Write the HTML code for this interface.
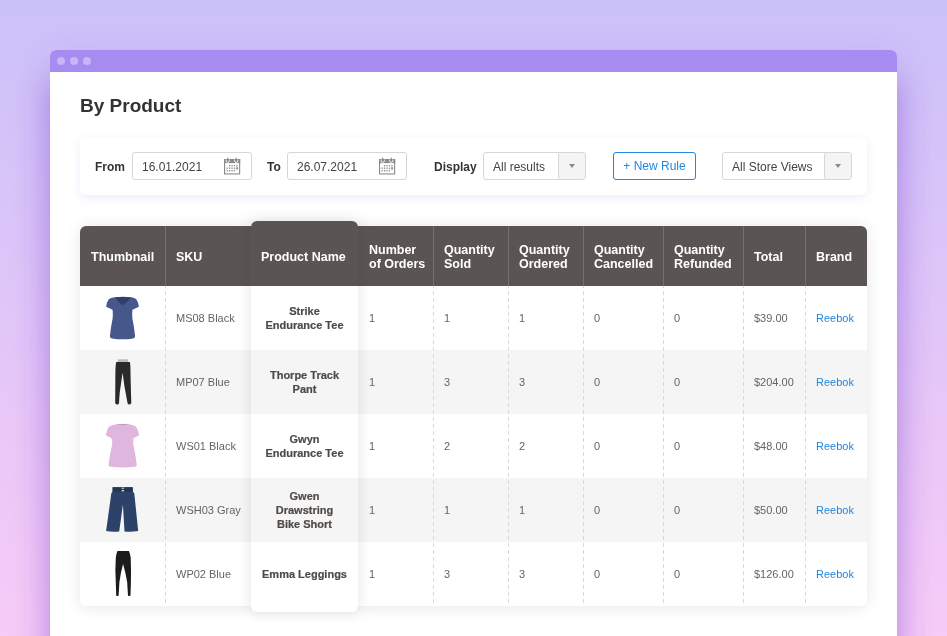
<!DOCTYPE html><html><head><meta charset="utf-8"><style>
*{margin:0;padding:0;box-sizing:border-box}
html,body{width:947px;height:636px;overflow:hidden}
body{font-family:"Liberation Sans",sans-serif;-webkit-font-smoothing:antialiased;background:linear-gradient(180deg,#cbc1f9 0%,#f7cbf7 100%);position:relative}
.win{position:absolute;left:50px;top:50px;width:847px;height:640px;background:#fff;border-radius:6px 6px 0 0;box-shadow:0 32px 30px rgba(115,55,205,0.38),0 12px 40px rgba(115,55,205,0.16)}
.tb{position:absolute;left:0;top:0;width:847px;height:22px;background:#a68cf0;border-radius:6px 6px 0 0}
.dot{position:absolute;top:7px;width:8px;height:8px;border-radius:50%;background:#c6b6f8}
.abs{position:absolute;white-space:nowrap}
h1,.lbl,.inp,.sel,.btn,.tbl,.pcol{will-change:transform}
h1{position:absolute;left:80px;top:95px;font-size:19px;font-weight:bold;color:#333;line-height:22px}
.card{position:absolute;left:80px;top:137px;width:787px;height:58px;background:#fff;border-radius:6px;box-shadow:0 3px 8px rgba(100,100,240,0.12)}
.lbl{position:absolute;font-size:12px;font-weight:bold;color:#333;line-height:28px;top:153px}
.inp{position:absolute;top:152px;height:28px;border:1px solid #d6d6d6;border-radius:3px;background:#fff;font-size:12px;color:#444;line-height:28px;padding-left:9px}
.cal{position:absolute;top:3px;left:90px}
.sel{position:absolute;top:152px;height:28px;border:1px solid #d6d6d6;border-radius:3px;background:#fff;font-size:12px;color:#444;line-height:28px;padding-left:9px}
.sel .arr{position:absolute;right:0;top:0;width:27px;height:26px;background:#f4f4f4;border-left:1px solid #d6d6d6;border-radius:2px 2px 2px 2px}
.sel .arr:after{content:"";position:absolute;left:10px;top:11px;border-left:3.5px solid transparent;border-right:3.5px solid transparent;border-top:4px solid #8a8a8a}
.btn{position:absolute;left:613px;top:152px;width:83px;height:28px;border:1px solid #1f88e2;border-radius:3px;color:#1f88e2;font-size:12px;line-height:26px;text-align:center}
.tbl{position:absolute;left:80px;top:226px;width:787px;height:380px;border-radius:6px;box-shadow:0 1px 16px rgba(0,0,0,0.10);background:#fff;overflow:hidden}
.hd{position:absolute;top:0;height:60px;background:#5a5552;color:#fff;font-size:12.5px;font-weight:bold;line-height:14px;display:flex;align-items:center;padding-left:11px;padding-top:2px}
.hdv{position:absolute;top:0;width:1px;height:60px;background:#76716e}
.row{position:absolute;left:0;width:787px;height:64px}
.cell{position:absolute;top:0;height:64px;display:flex;align-items:center;padding-left:11px;font-size:11px;color:#69635f}
.dash{position:absolute;width:1px;background:repeating-linear-gradient(180deg,#d9d9d9 0,#d9d9d9 1.8px,transparent 1.8px,transparent 5.3px,#d9d9d9 5.3px,#d9d9d9 7px)}
.pcol{position:absolute;left:251px;top:221px;width:107px;height:391px;border-radius:6px;background:#fff;box-shadow:0 0 14px rgba(20,35,60,0.13);overflow:hidden}
.pname{position:absolute;left:0;width:107px;height:64px;display:flex;align-items:center;justify-content:center;text-align:center;font-size:11px;font-weight:bold;color:#4f4a46;line-height:14px;-webkit-text-stroke:0.2px #4f4a46}
.link{color:#1f87e0}
</style></head><body>
<div class="win"><div class="tb"><div class="dot" style="left:7px"></div><div class="dot" style="left:20px"></div><div class="dot" style="left:33px"></div></div></div>
<h1>By Product</h1>
<div class="card"></div>
<div class="lbl" style="left:95px">From</div>
<div class="inp" style="left:132px;width:120px">16.01.2021<svg class="cal" width="20" height="20" viewBox="0 0 20 20"><rect x="1.55" y="3.55" width="15.1" height="14.4" fill="none" stroke="#8a8a8a" stroke-width="1.1"/><rect x="1" y="3" width="16.2" height="4.1" fill="#8a8a8a"/><path d="M3.1,3.6 L3.1,4.8 Q3.1,6.4 4.7,6.4 Q6.3,6.4 6.3,4.8 L6.3,3.6 M11.6,3.6 L11.6,4.8 Q11.6,6.4 13.2,6.4 Q14.8,6.4 14.8,4.8 L14.8,3.6" stroke="#fff" stroke-width="0.9" fill="none"/><rect x="4.1" y="1.7" width="1.2" height="3.6" fill="#8a8a8a"/><rect x="12.6" y="1.7" width="1.2" height="3.6" fill="#8a8a8a"/><g fill="#8f8f8f"><rect x="5.95" y="9.0" width="1.3" height="1.4"/><rect x="8.40" y="9.0" width="1.3" height="1.4"/><rect x="10.85" y="9.0" width="1.3" height="1.4"/><rect x="13.30" y="9.0" width="1.3" height="1.4"/><rect x="3.50" y="11.5" width="1.3" height="1.4"/><rect x="5.95" y="11.5" width="1.3" height="1.4"/><rect x="8.40" y="11.5" width="1.3" height="1.4"/><rect x="10.85" y="11.5" width="1.3" height="1.4"/><rect x="13.30" y="11.5" width="1.3" height="1.4"/><rect x="3.50" y="14.0" width="1.3" height="1.4"/><rect x="5.95" y="14.0" width="1.3" height="1.4"/><rect x="8.40" y="14.0" width="1.3" height="1.4"/><rect x="10.85" y="14.0" width="1.3" height="1.4"/><rect x="13.3" y="11.3" width="1.8" height="2.2"/></g></svg></div>
<div class="lbl" style="left:267px">To</div>
<div class="inp" style="left:287px;width:120px">26.07.2021<svg class="cal" width="20" height="20" viewBox="0 0 20 20"><rect x="1.55" y="3.55" width="15.1" height="14.4" fill="none" stroke="#8a8a8a" stroke-width="1.1"/><rect x="1" y="3" width="16.2" height="4.1" fill="#8a8a8a"/><path d="M3.1,3.6 L3.1,4.8 Q3.1,6.4 4.7,6.4 Q6.3,6.4 6.3,4.8 L6.3,3.6 M11.6,3.6 L11.6,4.8 Q11.6,6.4 13.2,6.4 Q14.8,6.4 14.8,4.8 L14.8,3.6" stroke="#fff" stroke-width="0.9" fill="none"/><rect x="4.1" y="1.7" width="1.2" height="3.6" fill="#8a8a8a"/><rect x="12.6" y="1.7" width="1.2" height="3.6" fill="#8a8a8a"/><g fill="#8f8f8f"><rect x="5.95" y="9.0" width="1.3" height="1.4"/><rect x="8.40" y="9.0" width="1.3" height="1.4"/><rect x="10.85" y="9.0" width="1.3" height="1.4"/><rect x="13.30" y="9.0" width="1.3" height="1.4"/><rect x="3.50" y="11.5" width="1.3" height="1.4"/><rect x="5.95" y="11.5" width="1.3" height="1.4"/><rect x="8.40" y="11.5" width="1.3" height="1.4"/><rect x="10.85" y="11.5" width="1.3" height="1.4"/><rect x="13.30" y="11.5" width="1.3" height="1.4"/><rect x="3.50" y="14.0" width="1.3" height="1.4"/><rect x="5.95" y="14.0" width="1.3" height="1.4"/><rect x="8.40" y="14.0" width="1.3" height="1.4"/><rect x="10.85" y="14.0" width="1.3" height="1.4"/><rect x="13.3" y="11.3" width="1.8" height="2.2"/></g></svg></div>
<div class="lbl" style="left:434px">Display</div>
<div class="sel" style="left:483px;width:103px">All results<div class="arr"></div></div>
<div class="btn">+ New Rule</div>
<div class="sel" style="left:722px;width:130px">All Store Views<div class="arr"></div></div>
<div class="tbl">
<div class="hd" style="left:0px;width:85px">Thumbnail</div>
<div class="hd" style="left:85px;width:86px">SKU</div>
<div class="hd" style="left:278px;width:75px">Number<br>of Orders</div>
<div class="hd" style="left:353px;width:75px">Quantity<br>Sold</div>
<div class="hd" style="left:428px;width:75px">Quantity<br>Ordered</div>
<div class="hd" style="left:503px;width:80px">Quantity<br>Cancelled</div>
<div class="hd" style="left:583px;width:80px">Quantity<br>Refunded</div>
<div class="hd" style="left:663px;width:62px">Total</div>
<div class="hd" style="left:725px;width:62px">Brand</div>
<div class="hdv" style="left:85px"></div>
<div class="hdv" style="left:353px"></div>
<div class="hdv" style="left:428px"></div>
<div class="hdv" style="left:503px"></div>
<div class="hdv" style="left:583px"></div>
<div class="hdv" style="left:663px"></div>
<div class="hdv" style="left:725px"></div>
<div class="row" style="top:60px;background:#fff">
<svg class="abs" style="left:18px;top:4px" width="50" height="55" viewBox="0 0 50 55"><path d="M16.7,7.2 Q25,6.4 33.3,7.2 Q36.5,7.8 38.3,9.2 Q40.2,12 40.9,16.8 L34.4,19.8 Q34,24 34.3,28 Q36.2,37 37.1,46.3 Q37,48 35,48.4 Q25,50.2 14,48.4 Q12,48 11.9,46.3 Q12.8,37 14.7,28 Q15,24 14.6,19.8 L8.1,16.8 Q8.8,12 10.7,9.2 Q12.5,7.8 16.7,7.2 Z" fill="#46578a"/><path d="M17.2,7.3 Q25,6.6 32.8,7.3 Q28.5,13.5 24.8,15 Q21,13.5 17.2,7.3 Z" fill="#313f6a"/></svg>
<div class="cell" style="left:85px">MS08 Black</div>
<div class="cell" style="left:278px">1</div>
<div class="cell" style="left:353px">1</div>
<div class="cell" style="left:428px">1</div>
<div class="cell" style="left:503px">0</div>
<div class="cell" style="left:583px">0</div>
<div class="cell" style="left:663px">$39.00</div>
<div class="cell link" style="left:725px">Reebok</div>
</div>
<div class="row" style="top:124px;background:#f5f5f5">
<svg class="abs" style="left:18px;top:4px" width="50" height="55" viewBox="0 0 50 55"><path d="M19.8,5.3 L30,5.3 L30.2,8.2 L19.6,8.2 Z" fill="#bdbdbd"/><path d="M18.2,8 L31.9,8 Q32.6,12 32.5,17 Q32.7,30 33.3,49 Q32.5,50.6 31.4,50.6 Q30,50.6 29.6,49.5 Q27.5,38 26.4,32 L24.6,18.8 L22.7,32 Q21.5,38 21,49.5 Q20.5,50.6 19.1,50.6 Q17.6,50.6 17.2,49 Q17.3,30 17.4,17 Q17.4,12 18.2,8 Z" fill="#2a2a2a"/></svg>
<div class="cell" style="left:85px">MP07 Blue</div>
<div class="cell" style="left:278px">1</div>
<div class="cell" style="left:353px">3</div>
<div class="cell" style="left:428px">3</div>
<div class="cell" style="left:503px">0</div>
<div class="cell" style="left:583px">0</div>
<div class="cell" style="left:663px">$204.00</div>
<div class="cell link" style="left:725px">Reebok</div>
</div>
<div class="row" style="top:188px;background:#fff">
<svg class="abs" style="left:18px;top:4px" width="50" height="55" viewBox="0 0 50 55"><path d="M19.5,5.9 Q25,5.6 30.2,5.9 Q34.5,6.6 37.5,8.2 Q40,11 41.2,17.3 L35.5,20.3 Q35,23 35.3,26.5 Q37.8,38 38.8,47 Q38.6,48.5 36.5,48.8 Q25,50.3 12.8,48.8 Q10.6,48.5 10.5,47 Q11.5,38 14.2,26.5 Q14.6,23 13.5,20.3 L7.7,17.3 Q9,11 11.5,8.2 Q14.5,6.6 19.5,5.9 Z" fill="#dfb7de"/><path d="M19.5,5.9 Q25,8.4 30.2,5.9 Q25,6.6 19.5,5.9 Z" fill="#bb96b9"/></svg>
<div class="cell" style="left:85px">WS01 Black</div>
<div class="cell" style="left:278px">1</div>
<div class="cell" style="left:353px">2</div>
<div class="cell" style="left:428px">2</div>
<div class="cell" style="left:503px">0</div>
<div class="cell" style="left:583px">0</div>
<div class="cell" style="left:663px">$48.00</div>
<div class="cell link" style="left:725px">Reebok</div>
</div>
<div class="row" style="top:252px;background:#f5f5f5">
<svg class="abs" style="left:18px;top:4px" width="50" height="55" viewBox="0 0 50 55"><path d="M14.6,5.3 L34.7,5.3 L34.8,9.8 Q36,10.5 36.3,11.5 L40.2,49 Q33,50.3 26.5,49.5 L24.9,22.5 L21.2,49.5 Q14.5,50.3 8.1,49 L13.3,11.5 Q13.6,10.5 14.6,9.8 Z" fill="#2d4268"/><path d="M14.6,5.3 L34.7,5.3 L34.8,9.8 L14.6,9.8 Z" fill="#243654"/><rect x="23.6" y="5.7" width="2.5" height="1" fill="#e6e9f0"/><rect x="23.6" y="8.1" width="2.5" height="1.2" fill="#e6e9f0"/></svg>
<div class="cell" style="left:85px">WSH03 Gray</div>
<div class="cell" style="left:278px">1</div>
<div class="cell" style="left:353px">1</div>
<div class="cell" style="left:428px">1</div>
<div class="cell" style="left:503px">0</div>
<div class="cell" style="left:583px">0</div>
<div class="cell" style="left:663px">$50.00</div>
<div class="cell link" style="left:725px">Reebok</div>
</div>
<div class="row" style="top:316px;background:#fff">
<svg class="abs" style="left:18px;top:4px" width="50" height="55" viewBox="0 0 50 55"><path d="M19.4,5.1 L30.9,5.1 Q32.3,8 32.7,11.8 Q33.3,25 32.9,36.3 Q32.7,44 32.5,49.5 Q31.3,50.5 30,49.5 Q29.6,44 29.2,36.3 Q27.5,26 25.1,17.9 Q22.7,26 21.4,36.3 Q21,44 20.6,49.5 Q19.3,50.5 18.2,49.5 Q18,44 17.8,36.3 Q16.9,25 17.8,11.8 Q18.2,8 19.4,5.1 Z" fill="#1c1c1c"/></svg>
<div class="cell" style="left:85px">WP02 Blue</div>
<div class="cell" style="left:278px">1</div>
<div class="cell" style="left:353px">3</div>
<div class="cell" style="left:428px">3</div>
<div class="cell" style="left:503px">0</div>
<div class="cell" style="left:583px">0</div>
<div class="cell" style="left:663px">$126.00</div>
<div class="cell link" style="left:725px">Reebok</div>
</div>
<div class="dash" style="left:85px;top:60px;height:320px"></div>
<div class="dash" style="left:353px;top:60px;height:320px"></div>
<div class="dash" style="left:428px;top:60px;height:320px"></div>
<div class="dash" style="left:503px;top:60px;height:320px"></div>
<div class="dash" style="left:583px;top:60px;height:320px"></div>
<div class="dash" style="left:663px;top:60px;height:320px"></div>
<div class="dash" style="left:725px;top:60px;height:320px"></div>
</div>
<div class="pcol">
<div class="hd" style="left:0;top:0;width:107px;height:65px;padding-top:7px;padding-left:10px">Product Name</div>
<div class="pname" style="top:65px;background:#fff">Strike<br>Endurance Tee</div>
<div class="pname" style="top:129px;background:#f5f5f5">Thorpe Track<br>Pant</div>
<div class="pname" style="top:193px;background:#fff">Gwyn<br>Endurance Tee</div>
<div class="pname" style="top:257px;background:#f5f5f5">Gwen<br>Drawstring<br>Bike Short</div>
<div class="pname" style="top:321px;background:#fff">Emma Leggings</div>
</div>
</body></html>
